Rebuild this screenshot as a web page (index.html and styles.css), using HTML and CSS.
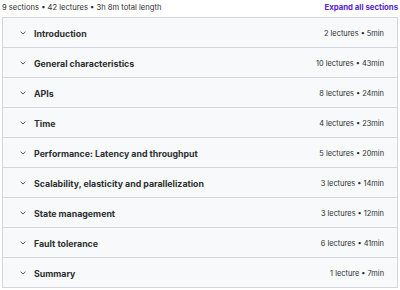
FILE: index.html
```html
<!DOCTYPE html>
<html lang="en">
<head>
  <meta charset="UTF-8" />
  <title>Course content</title>
  <link rel="stylesheet" href="styles.css">
</head>
<body>
  <div class="curriculum">
    <div class="summary">
      <span class="meta">9 sections • 42 lectures • 3h 8m total length</span>
      <button class="expand-all">Expand all sections</button>
    </div>

    <div class="sections">
      <div class="section"><span class="chev"><svg viewBox="0 0 6 4"><path d="M0.6 0.8 L3 3 L5.4 0.8"/></svg></span><span class="title">Introduction</span><span class="count">2 lectures • 5min</span></div>
      <div class="section"><span class="chev"><svg viewBox="0 0 6 4"><path d="M0.6 0.8 L3 3 L5.4 0.8"/></svg></span><span class="title">General characteristics</span><span class="count">10 lectures • 43min</span></div>
      <div class="section"><span class="chev"><svg viewBox="0 0 6 4"><path d="M0.6 0.8 L3 3 L5.4 0.8"/></svg></span><span class="title">APIs</span><span class="count">8 lectures • 24min</span></div>
      <div class="section"><span class="chev"><svg viewBox="0 0 6 4"><path d="M0.6 0.8 L3 3 L5.4 0.8"/></svg></span><span class="title">Time</span><span class="count">4 lectures • 23min</span></div>
      <div class="section"><span class="chev"><svg viewBox="0 0 6 4"><path d="M0.6 0.8 L3 3 L5.4 0.8"/></svg></span><span class="title">Performance: Latency and throughput</span><span class="count">5 lectures • 20min</span></div>
      <div class="section"><span class="chev"><svg viewBox="0 0 6 4"><path d="M0.6 0.8 L3 3 L5.4 0.8"/></svg></span><span class="title">Scalability, elasticity and parallelization</span><span class="count">3 lectures • 14min</span></div>
      <div class="section"><span class="chev"><svg viewBox="0 0 6 4"><path d="M0.6 0.8 L3 3 L5.4 0.8"/></svg></span><span class="title">State management</span><span class="count">3 lectures • 12min</span></div>
      <div class="section"><span class="chev"><svg viewBox="0 0 6 4"><path d="M0.6 0.8 L3 3 L5.4 0.8"/></svg></span><span class="title">Fault tolerance</span><span class="count">6 lectures • 41min</span></div>
      <div class="section"><span class="chev"><svg viewBox="0 0 6 4"><path d="M0.6 0.8 L3 3 L5.4 0.8"/></svg></span><span class="title">Summary</span><span class="count">1 lecture • 7min</span></div>
    </div>
  </div>
</body>
</html>
```

FILE: styles.css
```css
* { margin: 0; padding: 0; box-sizing: border-box; }

body {
  font-family: Inter, 'Noto Sans', sans-serif;
  background: #fff;
  color: #2d2f31;
}

.curriculum {
  padding: 0 2px 0 2px;
}

.summary {
  height: 17px;
  display: flex;
  align-items: center;
  justify-content: space-between;
  padding-bottom: 3px;
}

.meta {
  font-size: 7.6px;
  color: #2d2f31;
}

.expand-all {
  background: none;
  border: none;
  font-family: inherit;
  font-size: 7.8px;
  font-weight: 700;
  color: #5624d0;
  cursor: pointer;
}

.sections {
  border: 1px solid #d1d7dc;
}

.section {
  height: 30px;
  display: flex;
  align-items: center;
  background: #f7f9fa;
  border-top: 1px solid #d1d7dc;
  padding: 1px 13px 0 17px;
}

.section:first-child {
  border-top: none;
  height: 29px;
}

.chev {
  width: 6px;
  height: 4px;
  display: flex;
  margin-right: 8px;
}

.chev svg {
  width: 6px;
  height: 4px;
  fill: none;
  stroke: #2d2f31;
  stroke-width: 0.8;
}

.title {
  flex: 1;
  font-size: 8.8px;
  font-weight: 700;
}

.count {
  font-size: 7.4px;
}
```
